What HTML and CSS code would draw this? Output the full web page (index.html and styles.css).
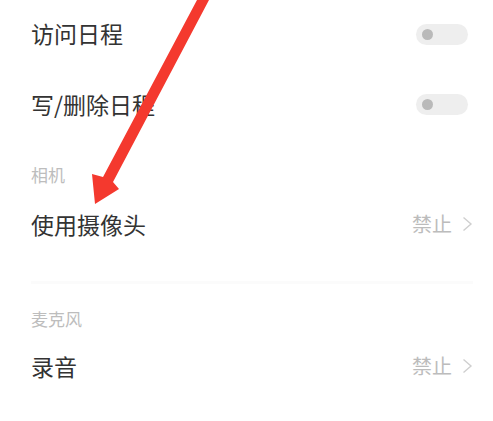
FILE: index.html
```html
<!DOCTYPE html>
<html lang="zh-CN">
<head>
<meta charset="utf-8">
<link rel="stylesheet" href="styles.css">
</head>
<body>
<div class="page">
  <div class="row first">
    <span class="title">访问日程</span>
    <span class="toggle"><span class="knob"></span></span>
  </div>
  <div class="row second">
    <span class="title">写/删除日程</span>
    <span class="toggle"><span class="knob"></span></span>
  </div>
  <div class="label cam">相机</div>
  <div class="row third">
    <span class="title">使用摄像头</span>
    <span class="value">禁止<svg class="chev" width="11" height="16" viewBox="0 0 11 16"><polyline points="1.5,1.5 9,8 1.5,14.5" fill="none" stroke="#cfcfcf" stroke-width="1.4"/></svg></span>
  </div>
  <div class="sep"></div>
  <div class="label mic">麦克风</div>
  <div class="row fourth">
    <span class="title">录音</span>
    <span class="value">禁止<svg class="chev" width="11" height="16" viewBox="0 0 11 16"><polyline points="1.5,1.5 9,8 1.5,14.5" fill="none" stroke="#cfcfcf" stroke-width="1.4"/></svg></span>
  </div>
  <svg class="arrow" width="493" height="421" viewBox="0 0 493 421">
    <polygon points="197,0 209,0 113,182 119,189 95,204 92,174 103,177" fill="#f4392e"/>
  </svg>
</div>
</body>
</html>
```
FILE: styles.css
```css
html, body {
  margin: 0;
  padding: 0;
  background: #ffffff;
}
.page {
  position: relative;
  width: 493px;
  height: 421px;
  overflow: hidden;
  padding: 0 20px 0 31px;
  box-sizing: border-box;
  font-family: "Noto Sans CJK SC", "Noto Sans", sans-serif;
}
.row {
  display: flex;
  align-items: center;
  justify-content: space-between;
}
.first { height: 66px; }
.second { height: 77px; }
.third { height: 78px; }
.fourth { height: 74px; }
.title {
  font-size: 23px;
  color: #333333;
  line-height: 1;
}
.toggle {
  position: relative;
  width: 52px;
  height: 21px;
  border-radius: 11px;
  background: #eeeeee;
  margin-right: 5px;
  display: flex;
  align-items: center;
}
.first .toggle { margin-top: 2px; }
.knob {
  width: 11px;
  height: 11px;
  border-radius: 50%;
  background: #b9b9b9;
  margin-left: 6px;
}
.label {
  font-size: 17px;
  line-height: 20px;
  height: 20px;
  color: #bdbdbd;
}
.cam { margin-top: 22px; }
.mic { margin-top: 25px; }
.sep {
  margin-top: 18px;
  height: 3px;
  background: #fbfbfb;
}
.value {
  display: flex;
  align-items: center;
  gap: 10px;
  font-size: 20px;
  color: #bcbcbc;
  line-height: 1;
}
.chev { display: block; }
.arrow {
  position: absolute;
  left: 0;
  top: 0;
}
```
